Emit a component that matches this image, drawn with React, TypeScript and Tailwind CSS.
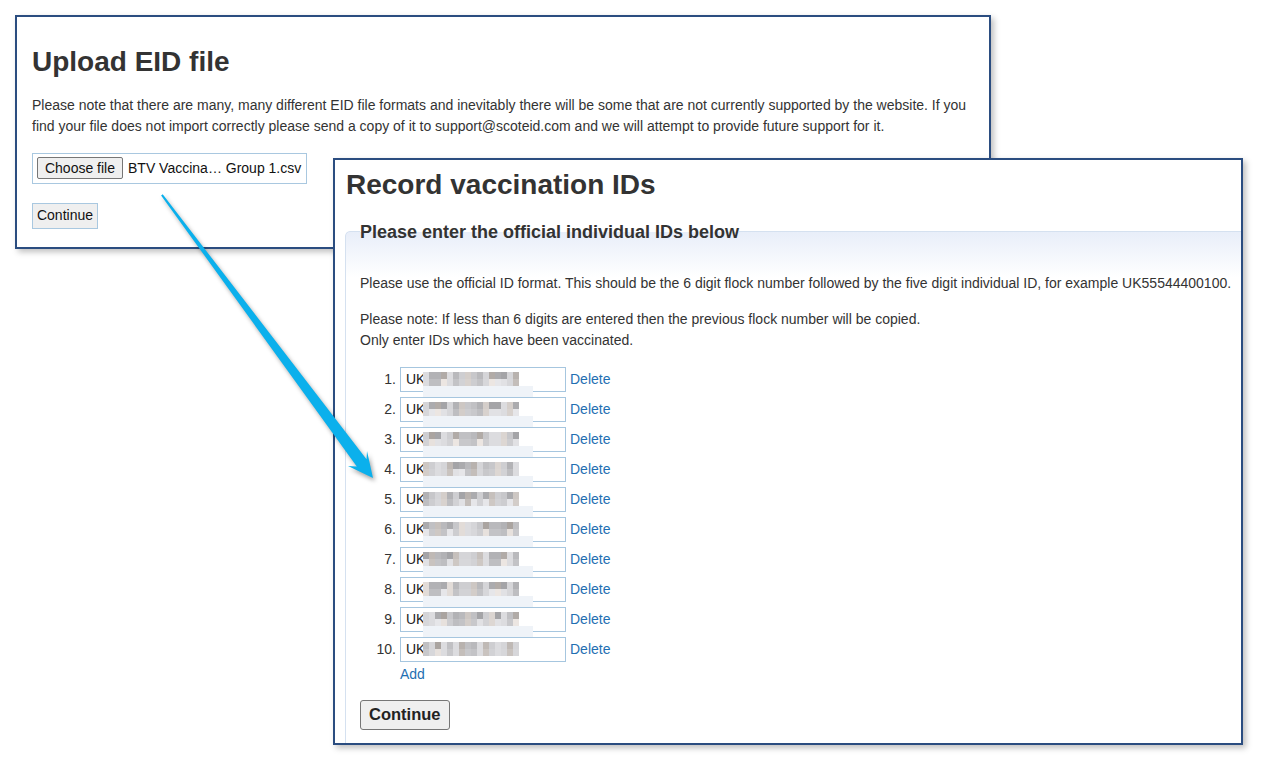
import React from "react"

const rows = Array.from({ length: 10 }, (_, i) => i + 1)

// pixelated blur over the hidden part of each ID
function Pixels({ seed, patch }: { seed: number; patch: boolean }) {
  const cells = Array.from({ length: 32 }, (_, i) => {
    const r = Math.floor(i / 16)
    const c = i % 16
    const v = (seed * 31 + c * 17 + r * 7 + ((c * c + seed) % 5) * 13) % 9
    const base = r === 0 ? 164 : 190
    const g = base + v * (r === 0 ? 7 : 5)
    const tint = (c + seed) % 4 === 0 ? 6 : 0
    return { r, c, color: `rgb(${g + tint}, ${g}, ${g + (tint ? -4 : 3)})` }
  })
  return (
    <>
      <div className="absolute left-[22px] top-[4px] z-10 grid grid-cols-[repeat(16,6px)] grid-rows-[repeat(2,7px)]">
        {cells.map((cell, i) => (
          <div key={i} style={{ backgroundColor: cell.color }} />
        ))}
      </div>
      {patch && <div className="absolute left-[22px] top-[18px] z-10 h-[11px] w-[110px] bg-[#eff3f8]" />}
    </>
  )
}

export default function App() {
  return (
    <div className="relative h-[766px] w-[1264px] overflow-hidden bg-white font-['Liberation_Sans',Arial,sans-serif] text-[#333]">
      {/* first window */}
      <div className="absolute left-[15px] top-[15px] h-[234px] w-[976px] border-2 border-[#2b4d80] bg-white px-[15px] pt-[28px] shadow-[3px_3px_6px_rgba(0,0,0,0.25)]">
        <h1 className="text-[28px] font-bold leading-[1.2]">Upload EID file</h1>
        <p className="mt-[16px] text-[14px] leading-[21px]">
          Please note that there are many, many different EID file formats and inevitably there will be some that are not currently supported by the website. If you
          <br />
          find your file does not import correctly please send a copy of it to support@scoteid.com and we will attempt to provide future support for it.
        </p>
        <div className="mt-[16px] flex h-[31px] w-[275px] items-center border border-[#a9c8e0] pl-[4px] text-[14px]">
          <button className="h-[22px] w-[86px] rounded-[2px] border border-[#767676] bg-[#efefef] text-[#111]">Choose file</button>
          <span className="ml-[5px] text-[#111]">BTV Vaccina… Group 1.csv</span>
        </div>
        <button className="mt-[19px] h-[26px] w-[66px] border border-[#a9c8e0] bg-[#efefef] text-[14px] text-[#111]">Continue</button>
      </div>

      {/* second window */}
      <div className="absolute left-[333px] top-[158px] h-[587px] w-[910px] overflow-hidden border-2 border-[#2b4d80] bg-white pl-[10px] pt-[8px] shadow-[3px_3px_6px_rgba(0,0,0,0.25)]">
        <h1 className="ml-[1px] text-[28px] font-bold leading-[1.2]">Record vaccination IDs</h1>
        <fieldset className="mt-[19px] w-[940px] rounded-tl-[5px] border border-[#d5e1f0] bg-[linear-gradient(to_bottom,#e8eef9,#ffffff_45px)] px-[14px] pb-[40px]">
          <legend className="text-[18px] font-bold leading-[22px]">Please enter the official individual IDs below</legend>
          <p className="mt-[30px] text-[14px] leading-[21px]">
            Please use the official ID format. This should be the 6 digit flock number followed by the five digit individual ID, for example UK55544400100.
          </p>
          <p className="mt-[15px] text-[14px] leading-[21px]">
            Please note: If less than 6 digits are entered then the previous flock number will be copied.
            <br />
            Only enter IDs which have been vaccinated.
          </p>
          <div className="mt-[14px] flex flex-col">
            {rows.map((n) => (
              <div key={n} className="flex h-[30px] items-center text-[14px]">
                <span className="w-[36px] text-right">{n}.</span>
                <div className="relative ml-[4px] flex h-[25px] w-[166px] items-center border border-[#a6c6df] bg-white pl-[5px] text-[#222]">
                  UK
                  <Pixels seed={n} patch={n < 10} />
                </div>
                <a href="#" className="ml-[4px] text-[#1f6fb2]">Delete</a>
              </div>
            ))}
          </div>
          <a href="#" className="-mt-[1px] ml-[40px] block text-[14px] leading-[21px] text-[#1f6fb2]">Add</a>
          <button className="mt-[15px] h-[30px] rounded-[3px] border border-[#767676] bg-[#efefef] px-[8px] text-[16.5px] font-bold text-[#222]">Continue</button>
        </fieldset>
      </div>

      {/* arrow */}
      <svg className="pointer-events-none absolute inset-0 z-20 drop-shadow-[2px_3px_2px_rgba(0,0,0,0.35)]" width="1264" height="766" viewBox="0 0 1264 766">
        <polygon
          fill="#0bb0ec"
          points="373,478 367,451 366.5,459.2 162.7,194.3 161.1,195.5 356.8,466.4 348,466"
        />
      </svg>
    </div>
  )
}
